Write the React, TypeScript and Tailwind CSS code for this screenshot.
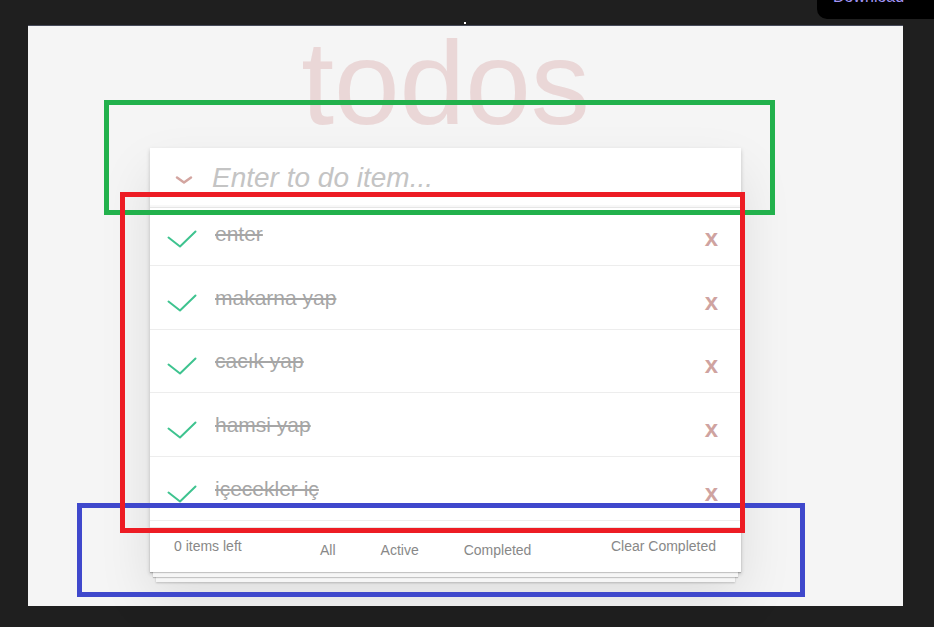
import { FC } from 'react';

const todos = [
  { id: 1, text: 'enter', h: 'h-[58px]' },
  { id: 2, text: 'makarna yap', h: 'h-[64px]' },
  { id: 3, text: 'cacık yap', h: 'h-[63px]' },
  { id: 4, text: 'hamsi yap', h: 'h-[64px]' },
  { id: 5, text: 'içecekler iç', h: 'h-[64px]' },
];

const filters = ['All', 'Active', 'Completed'];

const Check: FC = () => (
  <svg width="30" height="18" viewBox="0 0 30 18" fill="none" className="mb-[17px] flex-none">
    <polyline points="1.5,7.5 13,16.5 28.5,1.5" stroke="#3ec38f" strokeWidth="2" strokeLinecap="round" strokeLinejoin="round" />
  </svg>
);

const TodoCard: FC = () => (
  <div className="w-[591px] bg-white shadow-[0_2px_4px_0_rgba(0,0,0,0.2),0_25px_50px_0_rgba(0,0,0,0.1)]">
    <div className="flex h-[60px] items-center border-b border-[#e6e6e6] pl-[24px] shadow-[inset_0_-2px_1px_rgba(0,0,0,0.03)]">
      <svg width="20" height="10" viewBox="0 0 20 10" fill="none" className="mt-[5px] flex-none">
        <polyline points="3,2.5 10,7.5 17,2.5" stroke="#d3a5a0" strokeWidth="2.5" strokeLinecap="round" strokeLinejoin="round" />
      </svg>
      <input
        className="ml-[18px] w-full bg-transparent text-[28px] leading-[32px] italic outline-none placeholder:text-[#c4c4c4]"
        placeholder="Enter to do item..."
      />
    </div>

    <ul>
      {todos.map((item) => (
        <li key={item.id} className={`${item.h} flex items-end border-b border-[#ededed] pr-[23px] pl-[17px]`}>
          <Check />
          <span className="mb-[19px] ml-[18px] text-[21px] leading-[24px] text-[#a6a6a6] line-through decoration-[#a6a6a6]">
            {item.text}
          </span>
          <span className="mb-[15px] ml-auto text-[24px] leading-[24px] font-semibold text-[#cfa3a0]">x</span>
        </li>
      ))}
    </ul>
    <div className="h-[6px]" />

    <footer className="flex h-[45px] items-start border-t border-[#e6e6e6] pr-[25px] pl-[24px] text-[14px] leading-[20px] text-[#888] shadow-[0_1px_1px_rgba(0,0,0,0.2),0_8px_0_-3px_#f6f6f6,0_9px_1px_-3px_rgba(0,0,0,0.2),0_16px_0_-6px_#f6f6f6,0_17px_2px_-6px_rgba(0,0,0,0.2)]">
      <span className="w-[146px] flex-none pt-[8px]">0 items left</span>
      <div className="flex gap-[45px] pt-[12px]">
        {filters.map((f) => (
          <span key={f}>{f}</span>
        ))}
      </div>
      <span className="ml-auto pt-[8px]">Clear Completed</span>
    </footer>
  </div>
);

export default function App() {
  return (
    <div className="relative h-[627px] w-[934px] overflow-hidden bg-[#1f1f1f] pt-[25px] pr-[31px] pb-[21px] pl-[28px] font-['Liberation_Sans',Arial,sans-serif]">
      <div className="h-full border-t border-[#474b5a] bg-[#f5f5f5] pl-[122px]">
        <div className="w-[591px]">
          <h1 className="h-[114px] text-center text-[118px] leading-[114px] text-[#ead7d7]">todos</h1>
          <div className="mt-[8px]">
            <TodoCard />
          </div>
        </div>
      </div>

      {/* top bar bits */}
      <div className="absolute top-[22px] left-[464px] h-[2px] w-[2px] bg-white" />
      <div className="absolute top-0 right-0 h-[19px] w-[117px] overflow-hidden rounded-bl-[10px] bg-black">
        <span className="absolute top-[-13px] left-[16px] text-[16px] leading-[20px] text-[#a395f5]">Download</span>
      </div>

      {/* annotation boxes */}
      <div className="absolute top-[100px] left-[104px] h-[115px] w-[671px] border-[5px] border-[#22b14c]" />
      <div className="absolute top-[503px] left-[77px] h-[94px] w-[728px] border-[5px] border-[#3f48cc]" />
      <div className="absolute top-[192px] left-[120px] h-[341px] w-[625px] border-[5px] border-[#ed1c24]" />
    </div>
  );
}
